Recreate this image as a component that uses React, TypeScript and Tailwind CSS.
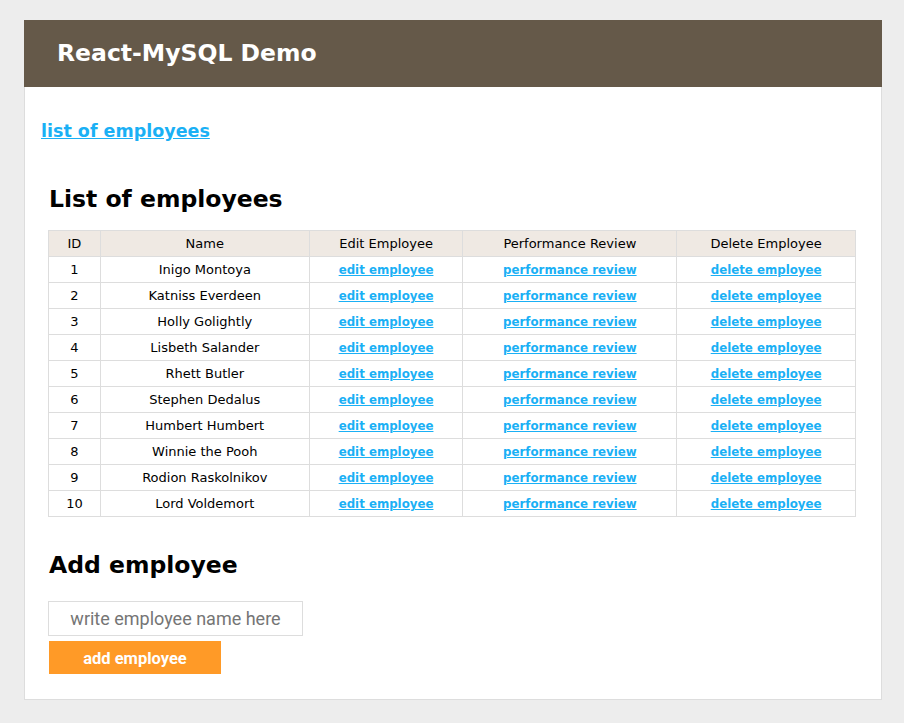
const employees = [
  "Inigo Montoya",
  "Katniss Everdeen",
  "Holly Golightly",
  "Lisbeth Salander",
  "Rhett Butler",
  "Stephen Dedalus",
  "Humbert Humbert",
  "Winnie the Pooh",
  "Rodion Raskolnikov",
  "Lord Voldemort",
];

const font = { fontFamily: "'DejaVu Sans', 'Noto Sans', sans-serif" };

const linkCls = "text-[11.8px] font-bold text-[#1ab0f5] underline";

const App = () => {
  return (
    <div className="min-h-[723px] bg-[#ededed] pt-5 pl-6" style={font}>
      <div className="w-[858px]">
        {/* header */}
        <div className="flex h-[67px] items-center bg-[#655949] pl-[33px]">
          <h1 className="text-[23.5px] font-bold text-white">React-MySQL Demo</h1>
        </div>

        <div className="h-[613px] border-x border-b border-[#dddddd] bg-white pl-4 pr-[25px]">
          <div className="pt-[32px] leading-[24px]">
            <a href="#" className="text-[17.5px] font-bold text-[#1ab0f5] underline">
              list of employees
            </a>
          </div>

          <div className="pl-[7px]">
            <h2 className="mt-[40px] pl-px text-[23.5px] font-bold leading-[30px] text-black">List of employees</h2>

            <table className="mt-[16px] w-[808px] border-collapse text-[13px] text-black">
              <colgroup>
                <col className="w-[52px]" />
                <col className="w-[209px]" />
                <col className="w-[154px]" />
                <col className="w-[214px]" />
                <col className="w-[179px]" />
              </colgroup>
              <thead>
                <tr className="h-[26px] bg-[#efe9e3]">
                  <th className="border border-[#dddddd] font-normal">ID</th>
                  <th className="border border-[#dddddd] font-normal">Name</th>
                  <th className="border border-[#dddddd] font-normal">Edit Employee</th>
                  <th className="border border-[#dddddd] font-normal">Performance Review</th>
                  <th className="border border-[#dddddd] font-normal">Delete Employee</th>
                </tr>
              </thead>
              <tbody>
                {employees.map((name, i) => (
                  <tr key={name} className="h-[26px] text-center">
                    <td className="border border-[#dddddd]">{i + 1}</td>
                    <td className="border border-[#dddddd]">{name}</td>
                    <td className="border border-[#dddddd]">
                      <a href="#" className={linkCls}>edit employee</a>
                    </td>
                    <td className="border border-[#dddddd]">
                      <a href="#" className={linkCls}>performance review</a>
                    </td>
                    <td className="border border-[#dddddd]">
                      <a href="#" className={linkCls}>delete employee</a>
                    </td>
                  </tr>
                ))}
              </tbody>
            </table>

            <h2 className="mt-[33px] pl-px text-[23.5px] font-bold leading-[30px] text-black">Add employee</h2>

            <div className="mt-[21px] flex flex-col items-start" style={{ fontFamily: "Roboto, 'Liberation Sans', sans-serif" }}>
              <input
                type="text"
                placeholder="write employee name here"
                className="h-[35px] w-[255px] border border-[#dddddd] bg-white text-center text-[18px] text-[#333] placeholder:text-[#757575] outline-none"
              />
              <button className="mt-[5px] ml-px h-[33px] w-[172px] bg-[#ff9a27] pt-[3px] text-[16.5px] font-bold text-white">
                add employee
              </button>
            </div>
          </div>
        </div>
      </div>
    </div>
  );
};

export default App;
